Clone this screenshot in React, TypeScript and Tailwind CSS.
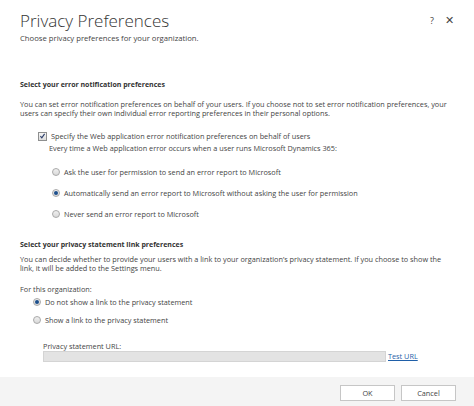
const font = "font-['Segoe_UI','Open_Sans','Liberation_Sans',sans-serif]";

function Radio({ checked }: { checked?: boolean }) {
  return (
    <span className="flex h-[8px] w-[8px] shrink-0 items-center justify-center rounded-full border border-[#a9a9a9] bg-gradient-to-b from-[#f0f0f0] to-[#d9d9d9]">
      {checked && <span className="h-[4px] w-[4px] rounded-full bg-[#1c4f8c]" />}
    </span>
  );
}

function Checkbox() {
  return (
    <span className="flex h-[9px] w-[9px] shrink-0 items-center justify-center border border-[#8e8f8f] bg-gradient-to-b from-[#f5f5f5] to-[#dcdcdc]">
      <svg viewBox="0 0 10 10" className="h-[8px] w-[8px]">
        <path d="M2 5.2 L4 7.5 L8 2" fill="none" stroke="#2c3e6b" strokeWidth="1.6" />
      </svg>
    </span>
  );
}

function RadioRow({ label, checked }: { label: string; checked?: boolean }) {
  return (
    <div className="flex h-[12px] items-center gap-[4px] leading-[12px]">
      <Radio checked={checked} />
      <span>{label}</span>
    </div>
  );
}

export default function App() {
  return (
    <div className={`flex h-[406px] w-[474px] flex-col overflow-hidden bg-white text-[7.3px] text-[#444] ${font}`}>
      <div className="flex-1 px-[20px]">
        <div className="flex items-start justify-between pt-[9px]">
          <h1 className="text-[17px] font-light leading-[23px] text-[#333]">Privacy Preferences</h1>
          <div className="flex items-center gap-[11px] pt-[3px] text-[9px] text-[#444]">
            <span>?</span>
            <span className="text-[11px]">✕</span>
          </div>
        </div>
        <p className="text-[7.7px] leading-[12px]">Choose privacy preferences for your organization.</p>

        <h2 className="mt-[35px] text-[7px] font-bold leading-[12px] text-[#333]">Select your error notification preferences</h2>
        <p className="mt-[9px] whitespace-nowrap leading-[9px]">
          <span className="block">You can set error notification preferences on behalf of your users. If you choose not to set error notification preferences, your</span>
          <span className="block">users can specify their own individual error reporting preferences in their personal options.</span>
        </p>

        <div className="mt-[12px] flex h-[12px] items-center gap-[4px] pl-[18px] leading-[12px]">
          <Checkbox />
          <span>Specify the Web application error notification preferences on behalf of users</span>
        </div>
        <p className="pl-[29px] leading-[12px]">Every time a Web application error occurs when a user runs Microsoft Dynamics 365:</p>

        <div className="mt-[12px] flex flex-col gap-[9px] pl-[32px]">
          <RadioRow label="Ask the user for permission to send an error report to Microsoft" />
          <RadioRow label="Automatically send an error report to Microsoft without asking the user for permission" checked />
          <RadioRow label="Never send an error report to Microsoft" />
        </div>

        <h2 className="mt-[19px] text-[7px] font-bold leading-[12px] text-[#333]">Select your privacy statement link preferences</h2>
        <p className="mt-[4px] whitespace-nowrap leading-[9px]">
          <span className="block">You can decide whether to provide your users with a link to your organization’s privacy statement. If you choose to show the</span>
          <span className="block">link, it will be added to the Settings menu.</span>
        </p>
        <p className="mt-[10px] leading-[12px]">For this organization:</p>
        <div className="mt-[1px] flex flex-col gap-[6px] pl-[13px]">
          <RadioRow label="Do not show a link to the privacy statement" checked />
          <RadioRow label="Show a link to the privacy statement" />
        </div>

        <div className="mt-[15px] pl-[23px]">
          <p className="leading-[10px]">Privacy statement URL:</p>
          <div className="flex items-center gap-[2px]">
            <div className="h-[11px] w-[343px] border border-[#d4d4d4] bg-[#e3e3e3]" />
            <a className="text-[#1f5fa8] underline">Test URL</a>
          </div>
        </div>
      </div>

      <div className="flex h-[29px] items-start justify-end gap-[6px] bg-[#f4f4f4] pt-[8px] pr-[18px]">
        <button className="h-[16px] w-[55px] border border-[#c6c6c6] bg-white text-[7.3px] text-[#444]">OK</button>
        <button className="h-[16px] w-[55px] border border-[#c6c6c6] bg-white text-[7.3px] text-[#444]">Cancel</button>
      </div>
    </div>
  );
}
